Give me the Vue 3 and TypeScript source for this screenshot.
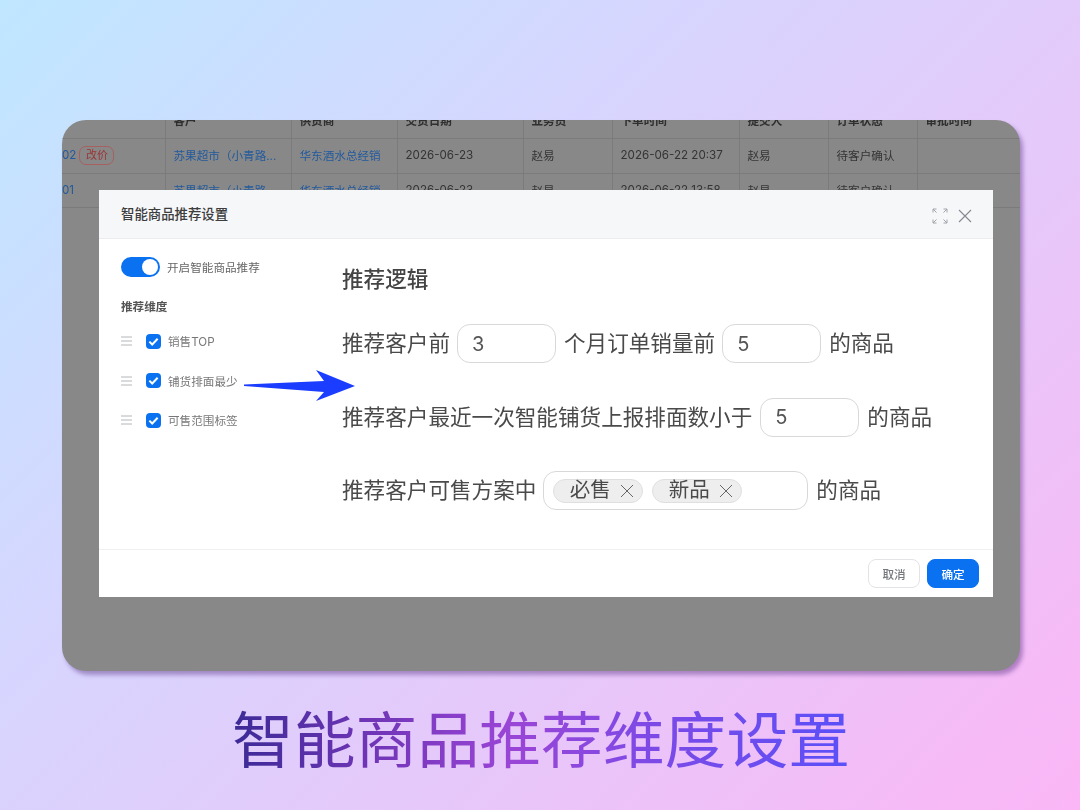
<template>
    <div class="page">
        <div class="window">
            <div class="table">
                <div class="row head">
                    <div v-for="col in columns" :key="col" class="cell">{{ col }}</div>
                </div>
                <div v-for="row in rows" :key="row.no" class="row">
                    <div class="cell no">
                        <span class="link">{{ row.no }}</span>
                        <span v-if="row.changed" class="badge">改价</span>
                    </div>
                    <div class="cell link">{{ row.customer }}</div>
                    <div class="cell link">华东酒水总经销</div>
                    <div class="cell">2026-06-23</div>
                    <div class="cell">赵易</div>
                    <div class="cell">{{ row.time }}</div>
                    <div class="cell">赵易</div>
                    <div class="cell">待客户确认</div>
                    <div class="cell"></div>
                </div>
            </div>

            <div class="modal">
                <div class="modal-header">
                    <span class="modal-title">智能商品推荐设置</span>
                    <div class="modal-tools">
                        <svg width="16" height="16" viewBox="0 0 16 16" fill="none" stroke="#a0a4aa" stroke-width="1">
                            <path d="M1 4.500V1h3.500M1 1l3.500 3.500M15 4.500V1h-3.500M15 1l-3.500 3.500M1 11.500V15h3.500M1 15l3.500-3.500M15 11.500V15h-3.500M15 15l-3.500-3.500" />
                        </svg>
                        <svg width="14" height="14" viewBox="0 0 14 14" fill="none" stroke="#85898f" stroke-width="1.1">
                            <path d="M1 1l12 12M13 1L1 13" />
                        </svg>
                    </div>
                </div>

                <div class="modal-body">
                    <div class="side">
                        <div class="switch-row">
                            <span class="switch"><i></i></span>
                            <span>开启智能商品推荐</span>
                        </div>
                        <div class="side-title">推荐维度</div>
                        <div v-for="item in dimensions" :key="item" class="dim">
                            <svg width="11" height="10" viewBox="0 0 11 10" stroke="#b4b6ba" stroke-width="1">
                                <path d="M0 1h11M0 5h11M0 9h11" />
                            </svg>
                            <span class="check">
                                <svg width="13" height="13" viewBox="0 0 11 11" fill="none" stroke="#fff" stroke-width="1.700">
                                    <path d="M2 5.600l2.400 2.400L9 3.200" />
                                </svg>
                            </span>
                            <span>{{ item }}</span>
                        </div>
                    </div>

                    <div class="logic">
                        <div class="logic-title">推荐逻辑</div>
                        <div class="logic-row">
                            <span class="txt">推荐客户前</span>
                            <span class="input">3</span>
                            <span class="txt">个月订单销量前</span>
                            <span class="input">5</span>
                            <span class="txt">的商品</span>
                        </div>
                        <div class="logic-row">
                            <span class="txt">推荐客户最近一次智能铺货上报排面数小于</span>
                            <span class="input nudge">5</span>
                            <span class="txt">的商品</span>
                        </div>
                        <div class="logic-row">
                            <span class="txt">推荐客户可售方案中</span>
                            <span class="input tags">
                                <span v-for="tag in tags" :key="tag" class="tag">
                                    <span class="tag-text">{{ tag }}</span>
                                    <svg width="14" height="14" viewBox="0 0 14 14" fill="none" stroke="#666" stroke-width="1">
                                        <path d="M1 1l12 12M13 1L1 13" />
                                    </svg>
                                </span>
                            </span>
                            <span class="txt">的商品</span>
                        </div>
                    </div>
                </div>

                <div class="modal-footer">
                    <button class="btn">取消</button>
                    <button class="btn primary">确定</button>
                </div>

                <!-- 标注箭头 -->
                <svg class="arrow" width="112" height="32" viewBox="0 0 112 32">
                    <path d="M0 14.500L80 11 72 0 111 16 72 31 80 22 0 16Z" fill="#1b3dff" />
                </svg>
            </div>
        </div>
        <div class="slogan">智能商品推荐维度设置</div>
    </div>
</template>

<script setup lang="ts">
const columns: string[] = ["", "客户", "供货商", "交货日期", "业务员", "下单时间", "提交人", "订单状态", "审批时间"];

const rows = [
    { no: "02", changed: true, customer: "苏果超市（小青路...", time: "2026-06-22 20:37" },
    { no: "01", changed: false, customer: "苏果超市（小青路...", time: "2026-06-22 13:58" },
];

const dimensions: string[] = ["销售TOP", "铺货排面最少", "可售范围标签"];
const tags: string[] = ["必售", "新品"];
</script>

<style>
html,
body {
    margin: 0;
}
</style>

<style scoped>
.page {
    width: 1080px;
    height: 810px;
    overflow: hidden;
    padding: 120px 60px 0 62px;
    box-sizing: border-box;
    background: linear-gradient(135deg, #bfe7ff 0%, #d6d6ff 35%, #e6c8fa 65%, #fbb6f6 100%);
    font-family: "Inter", "Noto Sans CJK SC", sans-serif;
}

.window {
    position: relative;
    height: 551px;
    border-radius: 24px;
    background: #888888;
    box-shadow: 3px 4px 4px rgba(90, 50, 130, 0.45);
    overflow: hidden;
    filter: blur(0.35px);
}

.table {
    margin-top: -16px;
    color: #343434;
    font-size: 11.6px;
}

.row {
    display: grid;
    grid-template-columns: 104px 126px 106px 126px 89px 127px 89px 89px 102px;
    height: 34.5px;
    border-bottom: 1px solid #7b7b7b;
    box-sizing: border-box;
}

.row.head {
    height: 35px;
    font-weight: 700;
    color: #2f2f2f;
}

.cell {
    display: flex;
    align-items: center;
    padding: 0 0 1.5px 7.5px;
    border-right: 1px solid #7b7b7b;
    white-space: nowrap;
    overflow: hidden;
}

.cell:last-child {
    border-right: none;
}

.cell.no {
    padding-left: 0;
    gap: 3px;
}

.link {
    color: #225a9e;
}

.badge {
    width: 35px;
    height: 19px;
    box-sizing: border-box;
    border: 1px solid #a85f5f;
    border-radius: 7px;
    color: #9c3434;
    font-size: 11px;
    text-align: center;
    line-height: 17px;
}

.modal {
    position: absolute;
    left: 37px;
    top: 70px;
    width: 894px;
    height: 407px;
    display: flex;
    flex-direction: column;
    background: #fff;
    border-radius: 6px 6px 0 0;
    color: #444;
}

.modal-header {
    height: 49px;
    flex-shrink: 0;
    display: flex;
    align-items: center;
    justify-content: space-between;
    padding: 0 21px 0 22px;
    box-sizing: border-box;
    background: #f6f7f9;
    border-bottom: 1px solid #ececee;
}

.modal-title {
    padding-bottom: 3px;
    font-size: 13.4px;
    font-weight: 500;
    color: #3d3d3d;
}

.modal-tools {
    display: flex;
    align-items: center;
    gap: 10px;
    margin-top: 3px;
}

.modal-body {
    flex: 1;
    display: flex;
    min-height: 0;
}

.side {
    width: 243px;
    padding: 18px 0 0 22px;
    box-sizing: border-box;
    font-size: 11.6px;
    color: #666;
    flex-shrink: 0;
}

.switch-row {
    display: flex;
    align-items: center;
    gap: 7px;
    height: 20px;
}

.switch {
    width: 39px;
    height: 20px;
    border-radius: 10px;
    background: #0a72f0;
    position: relative;
}

.switch i {
    position: absolute;
    right: 2px;
    top: 2px;
    width: 16px;
    height: 16px;
    border-radius: 50%;
    background: #fff;
}

.side-title {
    margin: 21px 0 5.5px;
    font-weight: 600;
    color: #555;
    line-height: 18px;
}

.dim {
    display: flex;
    align-items: center;
    height: 39.5px;
    color: #777;
}

.check {
    width: 15px;
    height: 15px;
    margin: 0 7px 0 14px;
    border-radius: 4px;
    background: #0a72f0;
    display: flex;
    align-items: center;
    justify-content: center;
}

.logic {
    flex: 1;
    padding-top: 24px;
    font-size: 21.6px;
    color: #4a4a4a;
}

.logic-title {
    font-weight: 500;
    line-height: 32px;
    margin-bottom: 29px;
    color: #444;
}

.logic-row {
    display: flex;
    align-items: center;
    gap: 8px;
    height: 39px;
    margin-bottom: 34.5px;
    white-space: nowrap;
}

.txt {
    padding-bottom: 4px;
}

.input {
    width: 99px;
    height: 39px;
    box-sizing: border-box;
    margin-left: -1px;
    padding-left: 14px;
    display: flex;
    align-items: center;
    border: 1px solid #d8d8d8;
    border-radius: 13px;
    font-size: 20px;
    color: #555;
}

.input.nudge {
    margin-left: 0;
}

.input.tags {
    width: 265px;
    padding-left: 9px;
    gap: 9px;
}

.tag {
    width: 90px;
    height: 24px;
    box-sizing: border-box;
    padding-left: 15.5px;
    display: flex;
    align-items: center;
    gap: 9px;
    border: 1px solid #dfdfdf;
    border-radius: 12px;
    background: #eeeeee;
    font-size: 20.5px;
    color: #4a4a4a;
}

.tag-text {
    padding-bottom: 5px;
}

.modal-footer {
    height: 48px;
    flex-shrink: 0;
    display: flex;
    align-items: flex-start;
    justify-content: flex-end;
    gap: 7px;
    padding: 9px 14px 0 0;
    box-sizing: border-box;
    border-top: 1px solid #f0f0f0;
}

.btn {
    width: 52px;
    height: 29px;
    padding: 0;
    border: 1px solid #e2e3e6;
    border-radius: 8px;
    background: #fff;
    color: #75787d;
    font-family: inherit;
    font-size: 11.6px;
    font-weight: 500;
}

.btn.primary {
    border-color: #0a72f0;
    background: #0a72f0;
    color: #fff;
}

.arrow {
    position: absolute;
    left: 145px;
    top: 180px;
}

.slogan {
    margin-top: 31px;
    margin-left: 170px;
    width: 620px;
    font-size: 61.8px;
    line-height: 78px;
    white-space: nowrap;
    background: linear-gradient(90deg, #3b2a96 0%, #6f35b6 22%, #9a45d6 45%, #7a4ae8 70%, #5a50f8 100%);
    -webkit-background-clip: text;
    background-clip: text;
    color: transparent;
}
</style>
